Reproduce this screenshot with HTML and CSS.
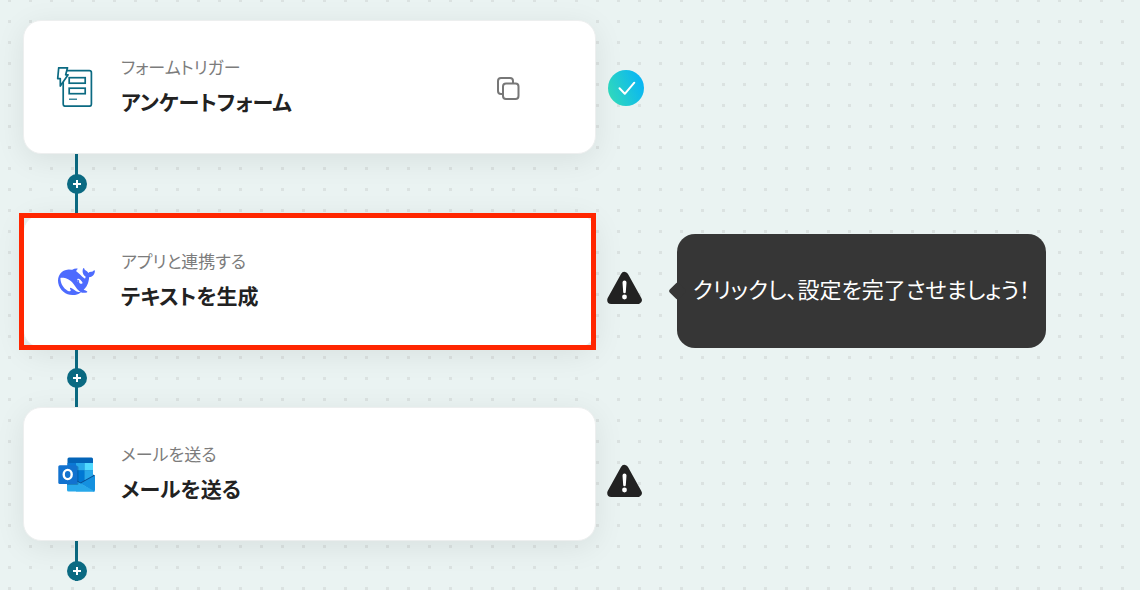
FILE: index.html
```html
<!DOCTYPE html>
<html lang="ja">
<head>
<meta charset="UTF-8">
<meta name="viewport" content="width=device-width, initial-scale=1">
<title>ワークフロー</title>
<link rel="stylesheet" href="styles.css">
</head>
<body>

<main class="flow">
  <!-- Trigger -->
  <section class="step">
    <div class="row">
      <div class="card">
        <svg class="icon" viewBox="0 0 40 40" fill="none" stroke="#0b6a82" stroke-width="1.7" stroke-linejoin="round">
          <rect x="7.200" y="3.700" width="28.200" height="35.500" rx="2"/>
          <rect x="13.200" y="10.700" width="16" height="5.500" stroke-linejoin="miter"/>
          <rect x="13.200" y="21.200" width="16" height="5.500" stroke-linejoin="miter"/>
          <path d="M13 32.200h8" stroke-width="1.200"/>
          <path d="M2.700 .8h8.800L9.700 7.800h2.400L4.300 19V11.600H1.700z" fill="#fff"/>
        </svg>
        <div class="text">
          <p class="label">フォームトリガー</p>
          <h2 class="title">アンケートフォーム</h2>
        </div>
        <button class="copy-button" type="button" aria-label="コピー">
          <svg viewBox="0 0 24 24" fill="none" stroke="#777" stroke-width="2">
            <path d="M6.500 18H5a3 3 0 0 1-3-3V5a3 3 0 0 1 3-3h9a3 3 0 0 1 3 3v2"/>
            <rect x="7" y="7.500" width="15.500" height="15.500" rx="3"/>
          </svg>
        </button>
      </div>
      <svg class="status" viewBox="0 0 36 36" role="img" aria-label="設定済み">
        <defs>
          <linearGradient id="done" x1="0" y1="0.700" x2="1" y2="0.300">
            <stop offset="0" stop-color="#30d9bb"/>
            <stop offset="1" stop-color="#08b4f6"/>
          </linearGradient>
        </defs>
        <circle cx="18" cy="18" r="18" fill="url(#done)"/>
        <path d="M11.500 18.200l5.300 5.600L26.300 12.700" fill="none" stroke="#fff" stroke-width="2" stroke-linecap="round" stroke-linejoin="round"/>
      </svg>
    </div>
    <div class="connector">
      <button class="add-button" type="button" aria-label="追加"></button>
    </div>
  </section>

  <!-- Text generation -->
  <section class="step selected">
    <div class="row">
      <div class="card">
        <svg class="icon" viewBox="-1.300 -1.500 26 26" fill="#4d6bfe">
          <path d="M23.748 4.482c-.254-.124-.364.113-.512.234-.051.039-.094.09-.137.136-.372.397-.806.657-1.373.626-.829-.046-1.537.214-2.163.848-.133-.782-.575-1.248-1.247-1.548-.352-.156-.708-.311-.955-.65-.172-.241-.219-.51-.305-.774-.055-.16-.11-.323-.293-.35-.2-.031-.278.136-.356.276-.313.572-.434 1.202-.422 1.84.027 1.436.633 2.58 1.838 3.393.137.093.172.187.129.323-.082.28-.18.552-.266.833-.055.179-.137.217-.329.14a5.526 5.526 0 01-1.736-1.18c-.857-.828-1.631-1.742-2.597-2.458a11.365 11.365 0 00-.689-.471c-.985-.957.13-1.743.388-1.836.27-.098.093-.432-.779-.428-.872.004-1.67.295-2.687.684a3.055 3.055 0 01-.465.137 9.597 9.597 0 00-2.883-.102c-1.885.21-3.39 1.102-4.497 2.623C.082 8.606-.231 10.684.152 12.85c.403 2.284 1.569 4.175 3.36 5.653 1.858 1.533 3.997 2.284 6.438 2.14 1.482-.085 3.133-.284 4.994-1.86.47.234.962.327 1.78.397.63.059 1.236-.03 1.705-.128.735-.156.684-.837.419-.961-2.155-1.004-1.682-.595-2.113-.926 1.096-1.296 2.746-2.642 3.392-7.003.05-.347.007-.565 0-.845-.004-.17.035-.237.23-.256a4.173 4.173 0 001.545-.475c1.396-.763 1.96-2.015 2.093-3.517.02-.23-.004-.467-.247-.588zM11.581 18c-2.089-1.642-3.102-2.183-3.52-2.16-.392.024-.321.471-.235.763.09.288.207.486.371.739.114.167.192.416-.113.603-.673.416-1.842-.14-1.897-.167-1.361-.802-2.5-1.86-3.301-3.307-.774-1.393-1.224-2.887-1.298-4.482-.02-.386.093-.522.477-.592a4.696 4.696 0 011.529-.039c2.132.312 3.946 1.265 5.468 2.774.868.86 1.525 1.887 2.202 2.891.72 1.066 1.494 2.082 2.48 2.914.348.292.625.514.891.677-.802.09-2.14.11-3.054-.614zm1-6.44a.306.306 0 01.415-.287.302.302 0 01.2.288.306.306 0 01-.31.307.303.303 0 01-.304-.308zm3.11 1.596c-.2.081-.399.151-.59.16a1.245 1.245 0 01-.798-.254c-.274-.23-.47-.358-.552-.758a1.73 1.73 0 01.016-.588c.07-.327-.008-.537-.239-.727-.187-.156-.426-.199-.688-.199a.559.559 0 01-.254-.078c-.11-.054-.2-.19-.114-.358.028-.054.16-.186.192-.21.356-.202.767-.136 1.146.016.352.144.618.408 1.001.782.391.451.462.576.685.914.176.265.336.537.445.848.067.195-.019.354-.25.452z"/>
        </svg>
        <div class="text">
          <p class="label">アプリと連携する</p>
          <h2 class="title">テキストを生成</h2>
        </div>
      </div>
      <svg class="status warning" viewBox="0 0 36 36" role="img" aria-label="未設定">
        <path d="M17.500 6L30.800 30H4.200z" fill="#222" stroke="#222" stroke-width="8" stroke-linejoin="round"/>
        <path d="M15.500 12.500a2 2 0 0 1 4 0l-.7 9.500a1.300 1.300 0 0 1-2.600 0z" fill="#fff"/>
        <circle cx="17.500" cy="27" r="2.400" fill="#fff"/>
      </svg>
      <div class="hint">クリックし、設定を完了させましょう！</div>
    </div>
    <div class="connector">
      <button class="add-button" type="button" aria-label="追加"></button>
    </div>
  </section>

  <!-- Mail -->
  <section class="step">
    <div class="row">
      <div class="card">
        <svg class="icon" viewBox="0 0 40 40">
          <path d="M13 3.500h22.500a1.500 1.500 0 0 1 1.500 1.500V30H11.500V5a1.500 1.500 0 0 1 1.500-1.500z" fill="#0364b8"/>
          <path d="M11.500 9H20v7.500h-8.500z" fill="#0a78d4"/>
          <path d="M20 9h8.500v7.500H20z" fill="#28a8ea"/>
          <path d="M28.500 9H37v7.500h-8.500z" fill="#50d9ff"/>
          <path d="M20 16.500h8.500V30H20z" fill="#0078d4"/>
          <path d="M28.500 16.500H37V26h-8.500z" fill="#28a8ea"/>
          <path d="M37 20.500l2 1v2L24.500 31.500 21 29v-2.500l3.500 2L37 21.500z" fill="#0a4f94"/>
          <path d="M11 28h10l18 9.500H12.500a1.500 1.500 0 0 1-1.500-1.500z" fill="#28a8ea"/>
          <path d="M39 21.500V36a1.500 1.500 0 0 1-1.500 1.500L24.500 29.500z" fill="#1490df"/>
          <path d="M21 27.500l17.500 9.700-1 .3H20z" fill="#28a8ea"/>
          <path d="M11 12h10a1.500 1.500 0 0 1 1.500 1.500v16a1.500 1.500 0 0 1-1.500 1.500H11z" fill="#053b70" opacity=".35"/>
          <rect x="2.300" y="11.200" width="19" height="18.800" rx="1.500" fill="#1272cf"/>
          <ellipse cx="11.700" cy="20.500" rx="4" ry="4.600" fill="none" stroke="#fff" stroke-width="2.400"/>
        </svg>
        <div class="text">
          <p class="label">メールを送る</p>
          <h2 class="title">メールを送る</h2>
        </div>
      </div>
      <svg class="status warning" viewBox="0 0 36 36" role="img" aria-label="未設定">
        <path d="M17.500 6L30.800 30H4.200z" fill="#222" stroke="#222" stroke-width="8" stroke-linejoin="round"/>
        <path d="M15.500 12.500a2 2 0 0 1 4 0l-.7 9.500a1.300 1.300 0 0 1-2.600 0z" fill="#fff"/>
        <circle cx="17.500" cy="27" r="2.400" fill="#fff"/>
      </svg>
    </div>
    <div class="connector last">
      <button class="add-button" type="button" aria-label="追加"></button>
    </div>
  </section>
</main>

</body>
</html>
```
FILE: styles.css
```css
* {
  box-sizing: border-box;
}

body {
  margin: 0;
  min-height: 100vh;
  font-family: "Noto Sans CJK JP", sans-serif;
  font-feature-settings: "palt";
  color: #222;
  background-color: #eaf3f2;
  /* Dotted canvas */
  background-image: radial-gradient(circle, #dbe2e1 1px, #dbe2e1 1.5px, transparent 2px);
  background-size: 21px 21px;
  background-position: -1px 11px;
}

button {
  border: none;
  padding: 0;
  cursor: pointer;
}

.flow {
  padding: 20px 23px 0;
}

.row {
  display: flex;
  align-items: center;
}

.card {
  display: flex;
  align-items: center;
  flex: 0 1 573px;
  gap: 25px;
  min-height: 134px;
  padding: 32px;
  background: #fff;
  border: 1px solid #edefef;
  border-radius: 18px;
  box-shadow: 0 6px 30px rgba(0, 0, 0, 0.08);
}

/* Red frame around the step to click */
.selected .card {
  position: relative;
}

.selected .card::after {
  content: "";
  position: absolute;
  inset: -2px -1px -3px -5px;
  border: 5px solid #ff2600;
}

.icon {
  flex: none;
  width: 40px;
  height: 40px;
}

.text {
  flex: 1;
}

.label {
  margin: 0 0 4px;
  font-size: 17px;
  font-weight: 400;
  line-height: 24px;
  color: #7c7c7c;
}

.title {
  margin: 0;
  font-size: 21px;
  font-weight: 700;
  line-height: 36px;
}

.copy-button {
  width: 24px;
  height: 24px;
  margin-top: 2px;
  margin-right: 43px;
  background: none;
}

.copy-button svg {
  display: block;
}

.status {
  flex: none;
  width: 36px;
  height: 36px;
  margin-top: 2px;
  margin-left: 12px;
}

.warning {
  margin-top: 14px;
  margin-left: 11px;
}

/* Dark bubble with an arrow on its left side */
.hint {
  position: relative;
  margin-top: 20px;
  margin-left: 34px;
  padding: 36px 16px 42px;
  font-size: 22px;
  line-height: 36px;
  color: #fff;
  background: #363636;
  border-radius: 18px;
}

.hint::before {
  content: "";
  position: absolute;
  left: -6px;
  top: 50%;
  width: 13px;
  height: 13px;
  background: #363636;
  border-radius: 2px;
  transform: translateY(-50%) rotate(45deg);
}

/* Line between two steps */
.connector {
  display: flex;
  align-items: center;
  justify-content: center;
  width: 20px;
  height: 60px;
  margin-left: 44px;
  background: linear-gradient(#0b6a82, #0b6a82) 8px 0 / 3px 100% no-repeat;
}

.selected .connector {
  height: 59px;
}

.connector.last {
  height: 40px;
  align-items: flex-end;
}

.add-button {
  width: 20px;
  height: 20px;
  border-radius: 50%;
  background:
    linear-gradient(#fff, #fff) center / 8px 2px no-repeat,
    linear-gradient(#fff, #fff) center / 2px 8px no-repeat,
    #0b6a82;
}
```
